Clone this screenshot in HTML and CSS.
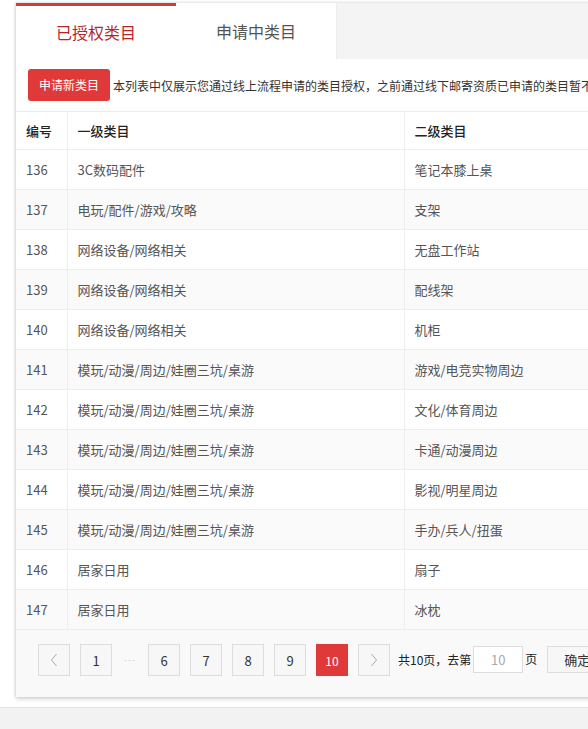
FILE: index.html
```html
<!DOCTYPE html>
<html lang="zh-CN">
<head>
<meta charset="utf-8">
<title>类目管理</title>
<link rel="stylesheet" href="styles.css">
</head>
<body>
<div class="wrap">
  <div class="tabs">
    <div class="tab active">已授权类目</div>
    <div class="tab second">申请中类目</div>
    <div class="tab-fill"></div>
  </div>
  <div class="panel">
    <div class="notice">
      <span class="btn">申请新类目</span>
      <span class="notice-text">本列表中仅展示您通过线上流程申请的类目授权，之前通过线下邮寄资质已申请的类目暂不在此展示</span>
    </div>
    <table class="grid">
      <colgroup><col class="c1"><col class="c2"><col class="c3"></colgroup>
      <thead>
        <tr><th>编号</th><th>一级类目</th><th>二级类目</th></tr>
      </thead>
      <tbody>
        <tr><td>136</td><td>3C数码配件</td><td>笔记本膝上桌</td></tr>
        <tr><td>137</td><td>电玩/配件/游戏/攻略</td><td>支架</td></tr>
        <tr><td>138</td><td>网络设备/网络相关</td><td>无盘工作站</td></tr>
        <tr><td>139</td><td>网络设备/网络相关</td><td>配线架</td></tr>
        <tr><td>140</td><td>网络设备/网络相关</td><td>机柜</td></tr>
        <tr><td>141</td><td>模玩/动漫/周边/娃圈三坑/桌游</td><td>游戏/电竞实物周边</td></tr>
        <tr><td>142</td><td>模玩/动漫/周边/娃圈三坑/桌游</td><td>文化/体育周边</td></tr>
        <tr><td>143</td><td>模玩/动漫/周边/娃圈三坑/桌游</td><td>卡通/动漫周边</td></tr>
        <tr><td>144</td><td>模玩/动漫/周边/娃圈三坑/桌游</td><td>影视/明星周边</td></tr>
        <tr><td>145</td><td>模玩/动漫/周边/娃圈三坑/桌游</td><td>手办/兵人/扭蛋</td></tr>
        <tr><td>146</td><td>居家日用</td><td>扇子</td></tr>
        <tr><td>147</td><td>居家日用</td><td>冰枕</td></tr>
      </tbody>
    </table>
    <div class="pager">
      <span class="pg arrow"><svg width="8" height="14" viewBox="0 0 8 14"><path d="M6.5 1 L1.5 7 L6.5 13" fill="none" stroke="#aaa" stroke-width="1"/></svg></span>
      <span class="pg">1</span>
      <span class="dots">···</span>
      <span class="pg">6</span>
      <span class="pg">7</span>
      <span class="pg">8</span>
      <span class="pg">9</span>
      <span class="pg current">10</span>
      <span class="pg arrow"><svg width="8" height="14" viewBox="0 0 8 14"><path d="M1.5 1 L6.5 7 L1.5 13" fill="none" stroke="#aaa" stroke-width="1"/></svg></span>
      <span class="total">共10页，去第</span>
      <span class="jump">10</span>
      <span class="unit">页</span>
      <span class="ok">确定</span>
    </div>
  </div>
</div>
<div class="footer"></div>
</body>
</html>
```

FILE: styles.css
```css
html, body {
  margin: 0;
  padding: 0;
  background: #fff;
  overflow: hidden;
  font-family: "Noto Sans CJK SC", "Noto Sans", sans-serif;
}

.wrap {
  margin: 2px 0 0 16px;
  width: 760px;
  box-shadow: 0 2px 4px rgba(0, 0, 0, 0.18), -1px 0 2px rgba(0, 0, 0, 0.08);
}

.tabs {
  display: flex;
  height: 56px;
  border-top: 1px solid #ebebeb;
  background: #f4f4f4;
}

.tab {
  width: 160px;
  display: flex;
  align-items: center;
  justify-content: center;
  background: #fff;
  font-size: 16px;
  color: #555;
  box-sizing: border-box;
}

.tab.active {
  border-top: 3px solid #d13b3b;
  color: #b4262b;
  padding-bottom: 2px;
}

.tab.second {
  width: 161px;
  border-right: 1px solid #ececec;
}

.tab-fill {
  flex: 1;
}

.panel {
  background: #fff;
}

.notice {
  height: 52px;
  display: flex;
  align-items: center;
  padding-left: 12px;
  gap: 3px;
  border-bottom: 1px solid #ebebeb;
  white-space: nowrap;
}

.btn {
  height: 32px;
  line-height: 32px;
  padding: 0 11px;
  background: #e0393a;
  color: #fff;
  font-size: 12px;
  border-radius: 3px;
}

.notice-text {
  font-size: 12px;
  color: #333;
}

.grid {
  border-collapse: collapse;
  width: 100%;
  table-layout: fixed;
  font-size: 13px;
}

.c1 { width: 51px; }
.c2 { width: 337px; }

.grid th,
.grid td {
  text-align: left;
  padding: 0 0 0 10px;
  border-bottom: 1px solid #eeeeee;
  border-right: 1px solid #eeeeee;
  white-space: nowrap;
}

.grid th {
  height: 37px;
  color: #222;
  font-weight: 500;
}

.grid td {
  height: 39px;
  color: #555;
}

.grid tbody tr:nth-child(even) td {
  background: #fafafa;
}

.pager {
  height: 67px;
  box-sizing: border-box;
  padding: 14px 0 0 22px;
  background: #f9f9f9;
  display: flex;
  align-items: flex-start;
  white-space: nowrap;
  font-size: 13px;
  color: #333;
}

.pg {
  width: 32px;
  height: 32px;
  box-sizing: border-box;
  border: 1px solid #dddddd;
  background: #f7f7f7;
  display: flex;
  align-items: center;
  justify-content: center;
  margin-right: 10px;
  color: #333;
}

.pg.current {
  background: #e0393a;
  border-color: #e0393a;
  color: #fff;
  font-size: 12px;
}

.dots {
  width: 16px;
  height: 32px;
  display: flex;
  align-items: center;
  justify-content: center;
  color: #bbb;
  font-family: "Liberation Sans", sans-serif;
  font-size: 9px;
  letter-spacing: 1px;
  margin-right: 10px;
}

.total {
  height: 32px;
  line-height: 32px;
  margin-left: -2px;
  color: #222;
  font-size: 12px;
}

.jump {
  width: 50px;
  height: 27px;
  margin-top: 2px;
  box-sizing: border-box;
  border: 1px solid #dddddd;
  background: #fff;
  color: #aaa;
  display: flex;
  align-items: center;
  justify-content: center;
  margin-left: 2px;
}

.unit {
  height: 32px;
  line-height: 30px;
  margin-left: 2px;
  color: #222;
  font-size: 12px;
}

.ok {
  height: 27px;
  margin-top: 2px;
  margin-left: 10px;
  padding: 0 16px;
  box-sizing: border-box;
  border: 1px solid #dddddd;
  background: #f7f7f7;
  display: flex;
  align-items: center;
  color: #333;
}

.footer {
  margin-top: 10px;
  height: 40px;
  border-top: 1px solid #e4e4e4;
  background: #f2f2f2;
}
```
